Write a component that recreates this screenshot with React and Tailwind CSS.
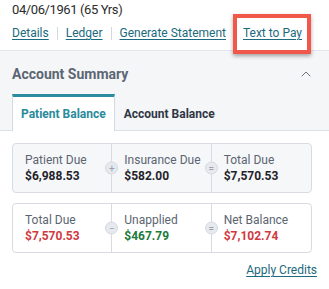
import { ChevronUp } from "lucide-react";

const dueItems = [
  { label: "Patient Due", value: "$6,988.53" },
  { label: "Insurance Due", value: "$582.00", sign: "+" },
  { label: "Total Due", value: "$7,570.53", sign: "=" },
];

const balanceItems = [
  { label: "Total Due", value: "$7,570.53", color: "text-[#d03a3f]" },
  { label: "Unapplied", value: "$467.79", color: "text-[#217a3b]", sign: "−" },
  { label: "Net Balance", value: "$7,102.74", color: "text-[#d03a3f]", sign: "=" },
];

function SignBadge({ sign }) {
  return (
    <span className="absolute -left-[7px] top-1/2 -translate-y-1/2 flex h-[13px] w-[13px] items-center justify-center rounded-full border border-[#d5dae0] bg-[#e6e9ed] text-[10px] leading-none text-[#9aa1ab]">
      {sign}
    </span>
  );
}

function SummaryCard({ items, muted }) {
  return (
    <div
      className={`grid w-[300px] grid-cols-3 divide-x divide-[#d8dce2] rounded border border-[#d8dce2] ${
        muted ? "bg-[#f6f7f9]" : "bg-white"
      }`}
    >
      {items.map((item) => (
        <div key={item.label} className="relative whitespace-nowrap pl-3 pr-1 pt-[9px] pb-[8px]">
          {item.sign && <SignBadge sign={item.sign} />}
          <div className="text-[12px] leading-[15px] text-[#5b6572]">{item.label}</div>
          <div
            className={`text-[12px] font-bold leading-[16px] ${item.color || "text-[#1f2329]"}`}
          >
            {item.value}
          </div>
        </div>
      ))}
    </div>
  );
}

export default function App() {
  const links = ["Details", "Ledger", "Generate Statement", "Text to Pay"];

  return (
    <div className="relative h-[289px] w-[329px] overflow-hidden bg-white font-['Roboto',sans-serif]">
      <div className="border-b border-[#e3e6ea] px-3 pb-2">
        <div className="text-[13px] leading-5 tracking-[-0.4px] text-[#2b2b2b]">04/06/1961 (65 Yrs)</div>
        <div className="mt-1 flex items-center text-[12px] leading-[18px] text-[#1b6a7d]">
          {links.map((l, i) => (
            <div key={l} className="flex items-center">
              {i > 0 && <span className="mx-[8px] h-[13px] w-px bg-[#d3d8de]" />}
              <span className="underline underline-offset-2">{l}</span>
            </div>
          ))}
        </div>
      </div>

      <div className="bg-[#f5f6f8] pt-[13px]">
        <div className="flex items-center justify-between px-3">
          <span className="text-[14px] font-bold leading-5 text-[#5c6673]">Account Summary</span>
          <ChevronUp className="mr-[3px] h-[16px] w-[16px] text-[#6b7280]" strokeWidth={1.5} />
        </div>
        <div className="mt-[10px] flex border-b border-[#dde1e6] px-3">
          <div className="-mb-px border-x border-t-[3px] border-x-[#d5dae0] border-t-[#2b8ea0] bg-white px-2 pt-[9px] pb-[9px] text-[12px] font-bold leading-4 text-[#2a8a9b]">
            Patient Balance
          </div>
          <div className="border-x border-t-[3px] border-transparent px-2 pt-[9px] pb-[8px] text-[12px] font-bold leading-4 text-[#2f3744]">
            Account Balance
          </div>
        </div>
      </div>

      <div className="border-b border-[#dde1e6] px-3 pt-3 pb-3">
        <SummaryCard items={dueItems} muted />
        <div className="mt-[10px]">
          <SummaryCard items={balanceItems} />
        </div>
        <div className="mt-[9px] flex justify-end">
          <span className="text-[12px] leading-4 text-[#1b6a7d] underline underline-offset-2">
            Apply Credits
          </span>
        </div>
      </div>
      <div className="h-2 bg-[#f7f8fa]" />

      <div className="pointer-events-none absolute left-[233px] top-[14px] h-[40px] w-[78px] border-4 border-[#f0584b] shadow-[0_2px_4px_rgba(0,0,0,0.35)]" />
    </div>
  );
}
